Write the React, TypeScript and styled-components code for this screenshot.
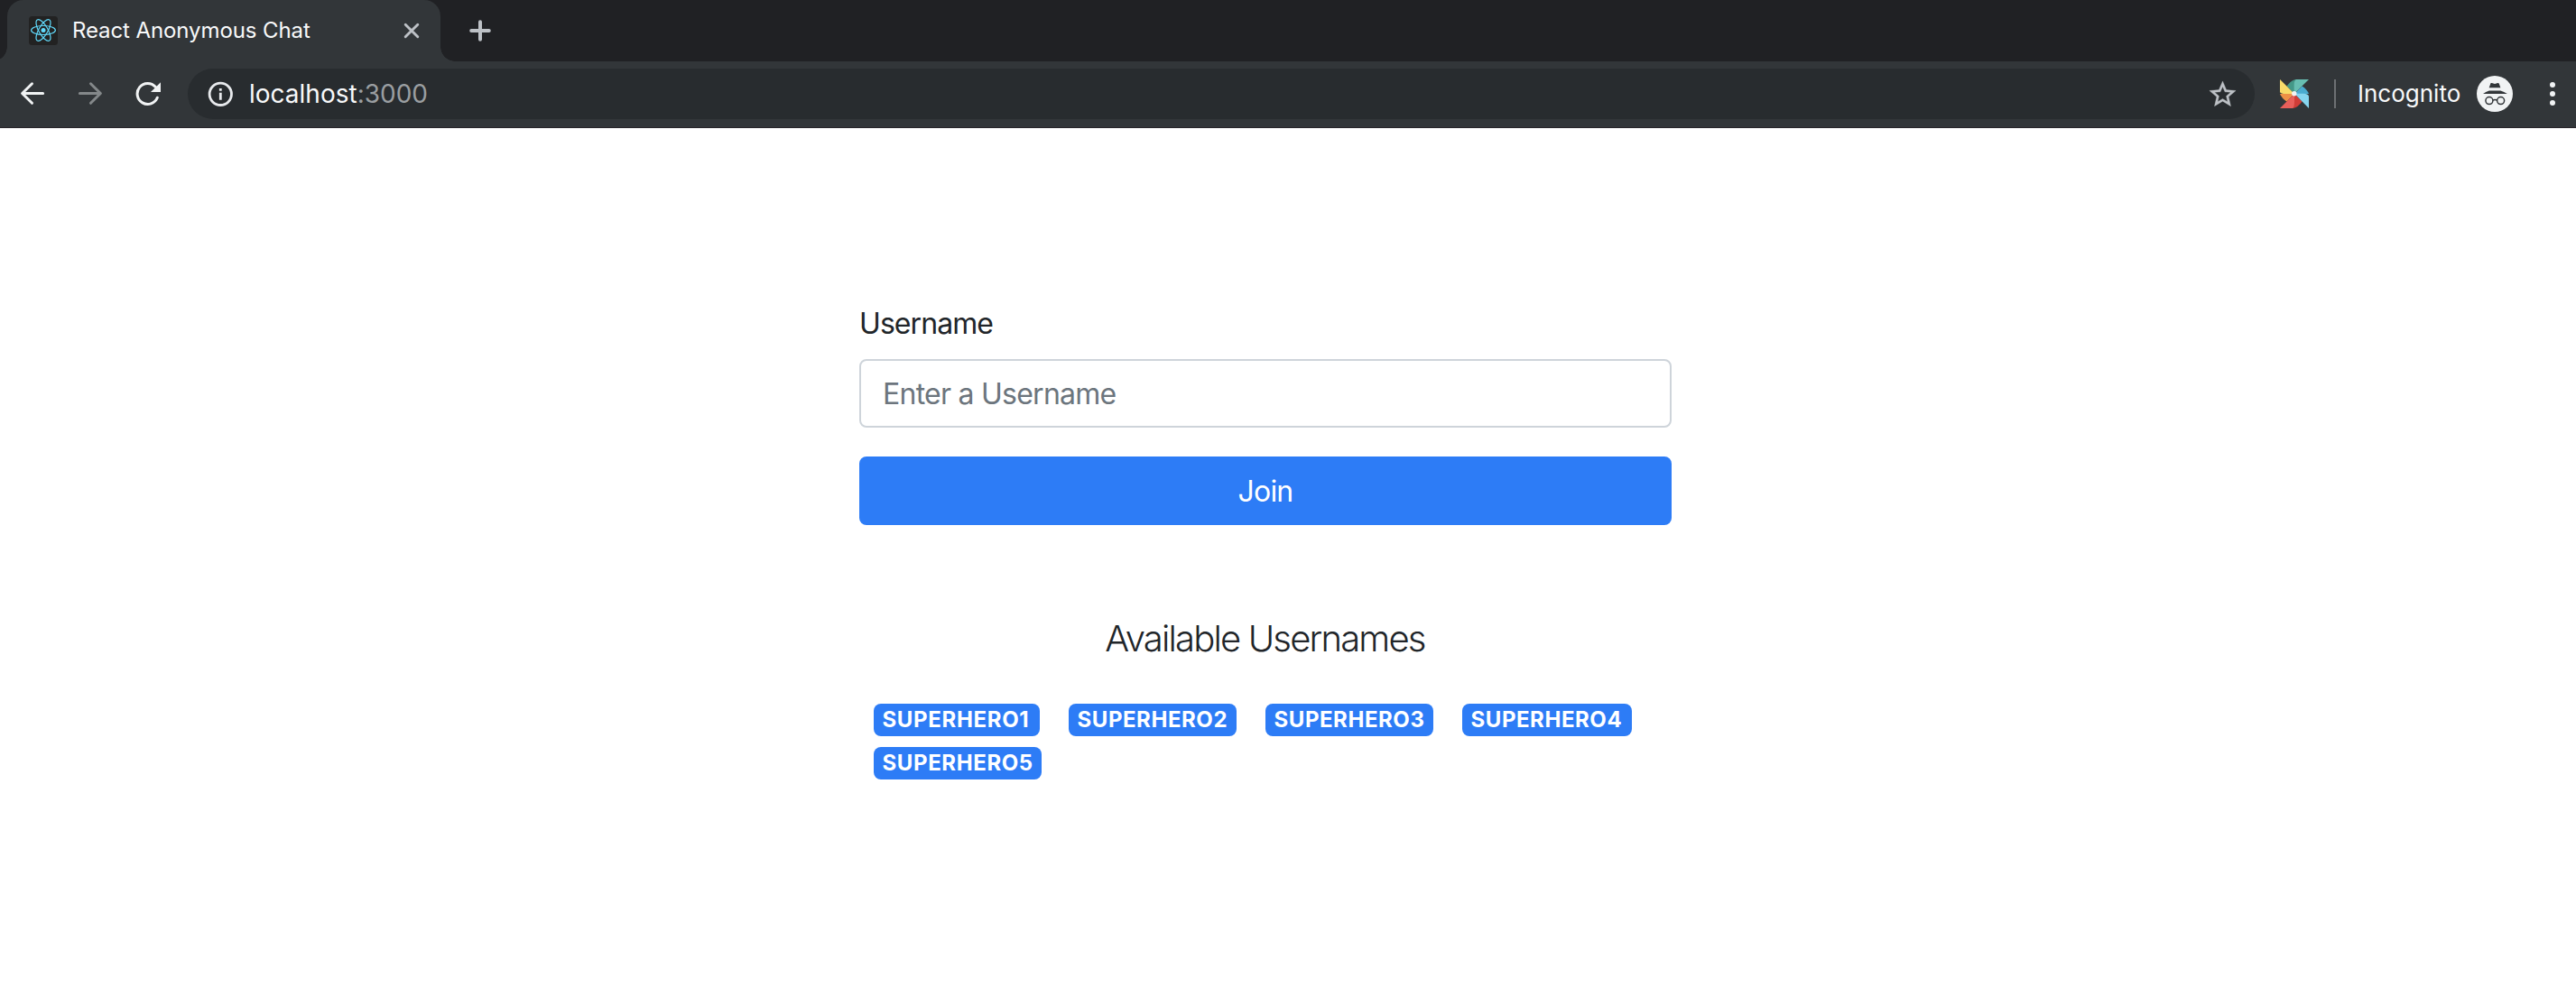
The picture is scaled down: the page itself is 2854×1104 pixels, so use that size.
import React from "react";
import styled, { createGlobalStyle } from "styled-components";

const GlobalStyle = createGlobalStyle`
  *, *::before, *::after {
    box-sizing: border-box;
  }
  body {
    margin: 0;
    background: #fff;
    color: #212529;
    font-family: Inter, "Liberation Sans", sans-serif;
    overflow: hidden;
  }
  svg {
    display: block;
    flex: none;
  }
`;

/* ---------- browser chrome ---------- */

const TabStrip = styled.header`
  display: flex;
  align-items: center;
  height: 68px;
  padding-left: 8px;
  background: #202124;
`;

const Tab = styled.div`
  position: relative;
  display: flex;
  align-items: center;
  width: 480px;
  height: 68px;
  padding: 0 23px 0 24px;
  border-radius: 18px 18px 0 0;
  background: #323639;

  &::before,
  &::after {
    content: "";
    position: absolute;
    bottom: 0;
    width: 16px;
    height: 16px;
  }
  &::before {
    right: 100%;
    background: radial-gradient(circle at 0 0, transparent 15.5px, #323639 16px);
  }
  &::after {
    left: 100%;
    background: radial-gradient(circle at 100% 0, transparent 15.5px, #323639 16px);
  }
`;

const TabTitle = styled.span`
  flex: 1;
  margin-left: 16px;
  font-size: 24px;
  letter-spacing: -0.1px;
  line-height: 32px;
  color: #f8f9fa;
  white-space: nowrap;
`;

const NewTab = styled.div`
  margin-left: 32px;
`;

const Toolbar = styled.nav`
  display: flex;
  align-items: center;
  height: 74px;
  padding: 0 20px 1px 22px;
  border-bottom: 1px solid #28242a;
  background: #323639;
`;

const NavButtons = styled.div`
  display: flex;
  gap: 36px;
`;

const AddressBar = styled.div`
  display: flex;
  flex: 1;
  align-items: center;
  height: 56px;
  margin-left: 30px;
  padding: 0 18px 0 22px;
  border-radius: 28px;
  background: #282c2f;
`;

const Url = styled.span`
  flex: 1;
  margin-left: 18px;
  font-size: 28px;
  line-height: 40px;
  color: #f8f9fa;
`;

const Port = styled.span`
  color: #9a9ea1;
`;

const Extension = styled.div`
  margin-left: 28px;
`;

const Divider = styled.div`
  width: 2px;
  height: 32px;
  margin: 0 24px 0 28px;
  background: #6d7073;
`;

const ModeLabel = styled.span`
  width: 132px;
  font-size: 26px;
  line-height: 36px;
  color: #f8f9fa;
`;

const MenuDots = styled.div`
  display: flex;
  flex-direction: column;
  align-items: center;
  gap: 4px;
  width: 12px;
  margin-left: 38px;
`;

const Dot = styled.i`
  width: 6px;
  height: 6px;
  border-radius: 50%;
  background: #f1f3f4;
`;

/* ---------- page ---------- */

const Page = styled.main`
  display: flex;
  flex-direction: column;
  height: 962px;
  padding: 193px 0 0 952px;
`;

const Form = styled.form`
  display: flex;
  flex-direction: column;
  width: 900px;
`;

const Label = styled.label`
  margin-bottom: 15px;
  font-size: 32px;
  letter-spacing: -0.92px;
  line-height: 48px;
`;

const Input = styled.input`
  height: 76px;
  padding: 0 24px;
  border: 2px solid #ced4da;
  border-radius: 8px;
  background: #fff;
  font-family: inherit;
  font-size: 32px;
  letter-spacing: -0.75px;
  color: #495057;

  &::placeholder {
    color: #6c757d;
    opacity: 1;
  }
`;

const JoinButton = styled.button`
  height: 76px;
  margin-top: 32px;
  border: 0;
  border-radius: 8px;
  background: #2d7cf6;
  color: #fff;
  font-family: inherit;
  font-size: 32px;
  letter-spacing: -0.8px;
`;

const Suggestions = styled.section`
  width: 900px;
  margin-top: 102px;
`;

const Heading = styled.h5`
  margin: 0 0 48px;
  padding-right: 1px;
  font-size: 40px;
  font-weight: 300;
  letter-spacing: -1.82px;
  line-height: 48px;
  text-align: center;
`;

const BadgeList = styled.div`
  display: flex;
  flex-wrap: wrap;
  gap: 12px 32px;
  padding-left: 16px;
`;

const Badge = styled.span<{ $width: number; $tracking: number }>`
  width: ${(p) => p.$width}px;
  height: 36px;
  padding-left: 9.5px;
  border-radius: 8px;
  background: #2d7cf6;
  color: #fff;
  font-size: 24px;
  font-weight: 700;
  letter-spacing: ${(p) => p.$tracking}px;
  line-height: 35px;
  white-space: nowrap;
`;

const usernames = [
  { name: "SUPERHERO1", width: 184, tracking: 0.65 },
  { name: "SUPERHERO2", width: 186, tracking: 0.55 },
  { name: "SUPERHERO3", width: 186, tracking: 0.55 },
  { name: "SUPERHERO4", width: 188, tracking: 0.55 },
  { name: "SUPERHERO5", width: 186, tracking: 0.6 },
];

/* ---------- icons ---------- */

const ReactIcon = () => (
  <svg width="32" height="32" viewBox="0 0 32 32">
    <rect width="32" height="32" rx="3.5" fill="#222" />
    <g fill="none" stroke="#61dafb" strokeWidth="1.2">
      <ellipse cx="16" cy="15.5" rx="13.4" ry="5" />
      <ellipse cx="16" cy="15.5" rx="13.4" ry="5" transform="rotate(60 16 15.5)" />
      <ellipse cx="16" cy="15.5" rx="13.4" ry="5" transform="rotate(120 16 15.5)" />
    </g>
    <circle cx="16" cy="15.5" r="2.5" fill="#61dafb" />
  </svg>
);

const CloseIcon = () => (
  <svg width="18" height="18" viewBox="0 0 18 18" stroke="#bdc1c6" strokeWidth="2.9" strokeLinecap="round">
    <path d="M2.2 2.2 15.8 15.8M15.8 2.2 2.2 15.8" />
  </svg>
);

const PlusIcon = () => (
  <svg width="24" height="24" viewBox="0 0 24 24" stroke="#bdc1c6" strokeWidth="4" strokeLinecap="round">
    <path d="M12 2.2V21.8M2.2 12H21.8" />
  </svg>
);

const ArrowIcon = ({ forward }: { forward?: boolean }) => (
  <svg
    width="28"
    height="28"
    viewBox="0 0 28 28"
    fill="none"
    stroke={forward ? "#84888a" : "#f1f3f4"}
    strokeWidth="3"
    strokeLinecap="round"
    strokeLinejoin="round"
  >
    <path
      transform={forward ? "matrix(-1 0 0 1 28 0)" : undefined}
      d="M25.6 13.5H3M13.5 2.8 2.6 13.5 13.5 24.3"
    />
  </svg>
);

const ReloadIcon = () => (
  <svg width="28" height="28" viewBox="0 0 28 28" fill="none">
    <path d="M24.3 18.2A11.5 11.5 0 1 1 22.2 6.3" stroke="#f1f3f4" strokeWidth="3" strokeLinecap="round" />
    <path d="M28 1.2V12H17z" fill="#f1f3f4" />
  </svg>
);

const InfoIcon = () => (
  <svg width="28" height="28" viewBox="0 0 28 28">
    <circle cx="14.3" cy="14.3" r="12.2" fill="none" stroke="#e8eaed" strokeWidth="2.8" />
    <path d="M12.9 8h2.8v2.8h-2.8zM12.9 12.8h2.8v8h-2.8z" fill="#e8eaed" />
  </svg>
);

const StarIcon = () => (
  <svg width="35" height="35" viewBox="0 0 24 24" fill="#bdc1c6" stroke="#bdc1c6" strokeWidth="0.25">
    <path d="M22 9.24l-7.19-.62L12 2 9.19 8.63 2 9.24l5.46 4.73L5.82 21 12 17.27 18.18 21l-1.63-7.03L22 9.24zM12 15.4l-3.76 2.27 1-4.28-3.32-2.88 4.38-.38L12 6.1l1.71 4.04 4.38.38-3.32 2.88 1 4.28L12 15.4z" />
  </svg>
);

const PinwheelIcon = () => (
  <svg width="32" height="32" viewBox="0 0 32 32">
    <path d="M17.5 0Q12 1 7.5 7.5L16 16z" fill="#449888" />
    <path d="M32 16Q30 11 24.5 7.5L16 16z" fill="#4aabcf" />
    <path d="M14.5 32Q20 31 24.5 24.5L16 16z" fill="#cf3d37" />
    <path d="M0 16Q2 21 7.5 24.5L16 16z" fill="#ee9146" />
    <path d="M32 0H17.5Q15.7 2 15.7 6V16z" fill="#67beb2" />
    <path d="M32 32V18.5Q31 15.7 26 15.7H16z" fill="#86d5ef" />
    <path d="M0 32H14.5Q16 30 16 25V16z" fill="#e85f5a" />
    <path d="M0 0V14Q1 16 6 16H16z" fill="#f8dc69" />
    <circle cx="15.8" cy="15.8" r="2.7" fill="#f3f3f3" />
  </svg>
);

const IncognitoIcon = () => (
  <svg width="40" height="40" viewBox="0 0 40 40">
    <circle cx="20" cy="20" r="20" fill="#f1f3f4" />
    <g fill="#323639">
      <path d="M15.8 8.1Q16.2 7.8 16.8 8L20 9 23.3 8Q24.2 7.8 24.7 8.6L26.4 13.2H13.7L15.3 8.8Q15.4 8.3 15.8 8.1z" />
      <path d="M7 20Q10 17.6 13.8 16.5H26.3Q30.5 17.6 33.8 20z" />
    </g>
    <g fill="none" stroke="#323639" strokeWidth="1.5">
      <circle cx="13.9" cy="27.6" r="4" />
      <circle cx="26.6" cy="27.6" r="4" />
      <path d="M17.9 27.2Q20.2 26 22.6 27.2" />
    </g>
  </svg>
);

export default function App() {
  return (
    <>
      <GlobalStyle />
      <TabStrip>
        <Tab>
          <ReactIcon />
          <TabTitle>React Anonymous Chat</TabTitle>
          <CloseIcon />
        </Tab>
        <NewTab>
          <PlusIcon />
        </NewTab>
      </TabStrip>
      <Toolbar>
        <NavButtons>
          <ArrowIcon />
          <ArrowIcon forward />
          <ReloadIcon />
        </NavButtons>
        <AddressBar>
          <InfoIcon />
          <Url>
            localhost<Port>:3000</Port>
          </Url>
          <StarIcon />
        </AddressBar>
        <Extension>
          <PinwheelIcon />
        </Extension>
        <Divider />
        <ModeLabel>Incognito</ModeLabel>
        <IncognitoIcon />
        <MenuDots>
          <Dot />
          <Dot />
          <Dot />
        </MenuDots>
      </Toolbar>
      <Page>
        <Form>
          <Label htmlFor="username">Username</Label>
          <Input id="username" placeholder="Enter a Username" />
          <JoinButton type="button">Join</JoinButton>
        </Form>
        <Suggestions>
          <Heading>Available Usernames</Heading>
          <BadgeList>
            {usernames.map((u) => (
              <Badge key={u.name} $width={u.width} $tracking={u.tracking}>
                {u.name}
              </Badge>
            ))}
          </BadgeList>
        </Suggestions>
      </Page>
    </>
  );
}
